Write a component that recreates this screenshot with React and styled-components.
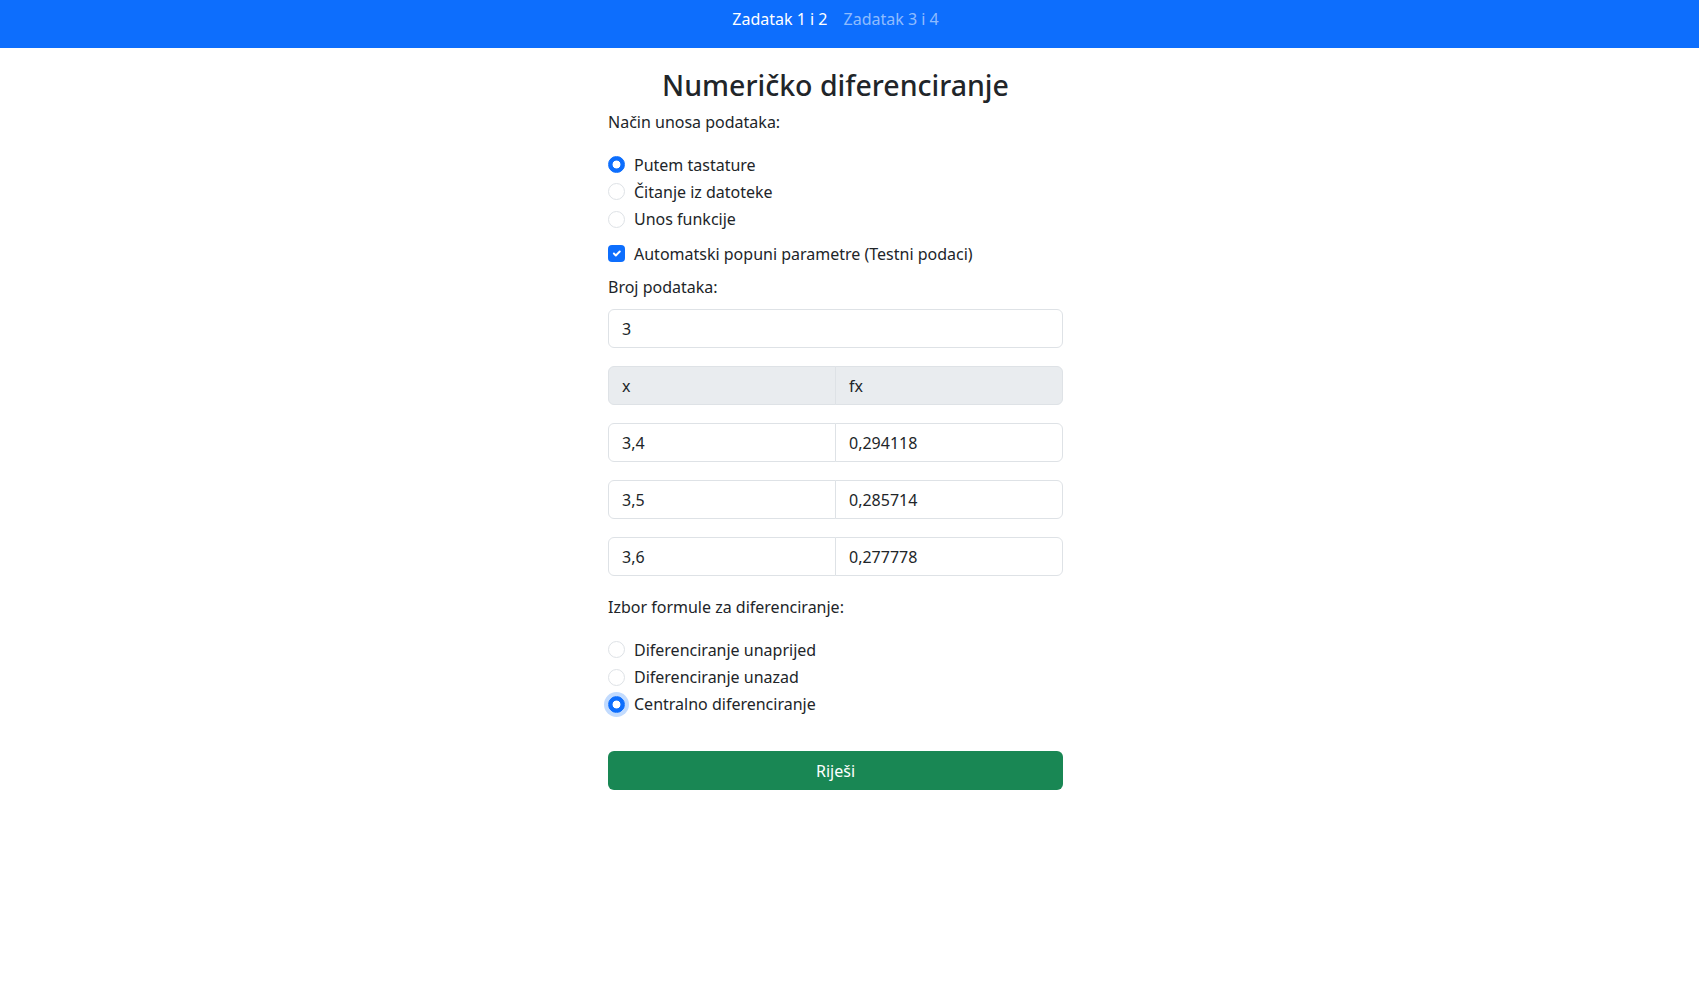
import React from "react";
import styled, { createGlobalStyle } from "styled-components";

const Global = createGlobalStyle`
  html, body { margin: 0; padding: 0; background: #fff; }
  body {
    font-family: "Noto Sans", "Open Sans", sans-serif;
    font-size: 16px;
    color: #212529;
    -webkit-font-smoothing: antialiased;
  }
  * { box-sizing: border-box; }
`;

const NavBar = styled.nav`
  height: 48px;
  background: #0d6efd;
  display: flex;
  justify-content: center;
  align-items: flex-start;
  padding: 7px 28px 0 0;
`;

const NavLink = styled.a`
  font-size: 16px;
  line-height: 25px;
  padding: 0 8px;
  text-decoration: none;
  color: ${(p) => (p.$active ? "#ffffff" : "rgba(255,255,255,0.55)")};
  cursor: pointer;
`;

const Main = styled.main`
  display: flex;
  justify-content: center;
  padding: 15px 28px 40px 0;
`;

const Form = styled.div`
  width: 455px;
  display: flex;
  flex-direction: column;
`;

const Title = styled.h2`
  margin: 0;
  padding-top: 2px;
  font-size: 28.5px;
  line-height: 40px;
  font-weight: 500;
  text-align: center;
  color: #212529;
`;

const Label = styled.div`
  font-size: 16px;
  line-height: 25px;
  margin-top: ${(p) => p.$mt}px;
`;

const CheckGroup = styled.div`
  display: flex;
  flex-direction: column;
  margin-top: ${(p) => p.$mt}px;
`;

const CheckRow = styled.label`
  display: flex;
  align-items: center;
  gap: 9px;
  height: 27.3px;
  font-size: 16px;
  cursor: pointer;
`;

const Radio = styled.span`
  width: 17px;
  height: 17px;
  border-radius: 50%;
  flex: none;
  border: 1px solid ${(p) => (p.$checked ? "#0d6efd" : "#dee2e6")};
  background: ${(p) =>
    p.$checked
      ? "radial-gradient(circle, #fff 0 3.6px, #0d6efd 4.3px)"
      : "#fff"};
  box-shadow: ${(p) => (p.$focus ? "0 0 0 4px rgba(13,110,253,0.25)" : "none")};
`;

const Checkbox = styled.span`
  width: 17px;
  height: 17px;
  border-radius: 4px;
  flex: none;
  background: #0d6efd;
  display: flex;
  align-items: center;
  justify-content: center;
`;

const TextInput = styled.input`
  display: block;
  width: 100%;
  height: 39px;
  margin-top: ${(p) => p.$mt || 0}px;
  padding: 0 13px;
  border: 1px solid #dee2e6;
  border-radius: 6px;
  font-family: inherit;
  font-size: 16px;
  color: #212529;
  background: #fff;
  outline: none;
`;

const Group = styled.div`
  display: flex;
  height: 39px;
  margin-top: ${(p) => p.$mt}px;
`;

const Cell = styled.div`
  flex: 1 1 0;
  display: flex;
  align-items: center;
  padding: 0 13px;
  font-size: 16px;
  color: #212529;
  background: ${(p) => (p.$head ? "#e9ecef" : "#fff")};
  border: 1px solid #dee2e6;
  border-radius: ${(p) => (p.$first ? "6px 0 0 6px" : "0 6px 6px 0")};
  margin-left: ${(p) => (p.$first ? 0 : -1)}px;
`;

const SolveButton = styled.button`
  margin-top: ${(p) => p.$mt}px;
  height: 39px;
  width: 100%;
  border: none;
  border-radius: 6px;
  background: #198754;
  color: #fff;
  font-family: inherit;
  font-size: 16px;
  cursor: pointer;
`;

const CheckMark = () => (
  <svg width="13" height="13" viewBox="0 0 20 20">
    <path
      d="M6 10l3 3l6-6"
      fill="none"
      stroke="#fff"
      strokeWidth="3"
      strokeLinecap="round"
      strokeLinejoin="round"
    />
  </svg>
);

const rows = [
  ["3,4", "0,294118"],
  ["3,5", "0,285714"],
  ["3,6", "0,277778"],
];

export default function App() {
  return (
    <>
      <Global />
      <NavBar>
        <NavLink $active>Zadatak 1 i 2</NavLink>
        <NavLink>Zadatak 3 i 4</NavLink>
      </NavBar>
      <Main>
        <Form>
          <Title>Numeričko diferenciranje</Title>
          <Label $mt={5}>Način unosa podataka:</Label>
          <CheckGroup $mt={16}>
            <CheckRow>
              <Radio $checked />
              Putem tastature
            </CheckRow>
            <CheckRow>
              <Radio />
              Čitanje iz datoteke
            </CheckRow>
            <CheckRow>
              <Radio />
              Unos funkcije
            </CheckRow>
          </CheckGroup>
          <CheckGroup $mt={7}>
            <CheckRow>
              <Checkbox>
                <CheckMark />
              </Checkbox>
              Automatski popuni parametre (Testni podaci)
            </CheckRow>
          </CheckGroup>
          <Label $mt={8}>Broj podataka:</Label>
          <TextInput $mt={9} value="3" readOnly />
          <Group $mt={18}>
            <Cell $head $first>x</Cell>
            <Cell $head>fx</Cell>
          </Group>
          {rows.map(([x, fx], i) => (
            <Group key={i} $mt={18}>
              <Cell $first>{x}</Cell>
              <Cell>{fx}</Cell>
            </Group>
          ))}
          <Label $mt={19}>Izbor formule za diferenciranje:</Label>
          <CheckGroup $mt={16}>
            <CheckRow>
              <Radio />
              Diferenciranje unaprijed
            </CheckRow>
            <CheckRow>
              <Radio />
              Diferenciranje unazad
            </CheckRow>
            <CheckRow>
              <Radio $checked $focus />
              Centralno diferenciranje
            </CheckRow>
          </CheckGroup>
          <SolveButton $mt={33}>Riješi</SolveButton>
        </Form>
      </Main>
    </>
  );
}
